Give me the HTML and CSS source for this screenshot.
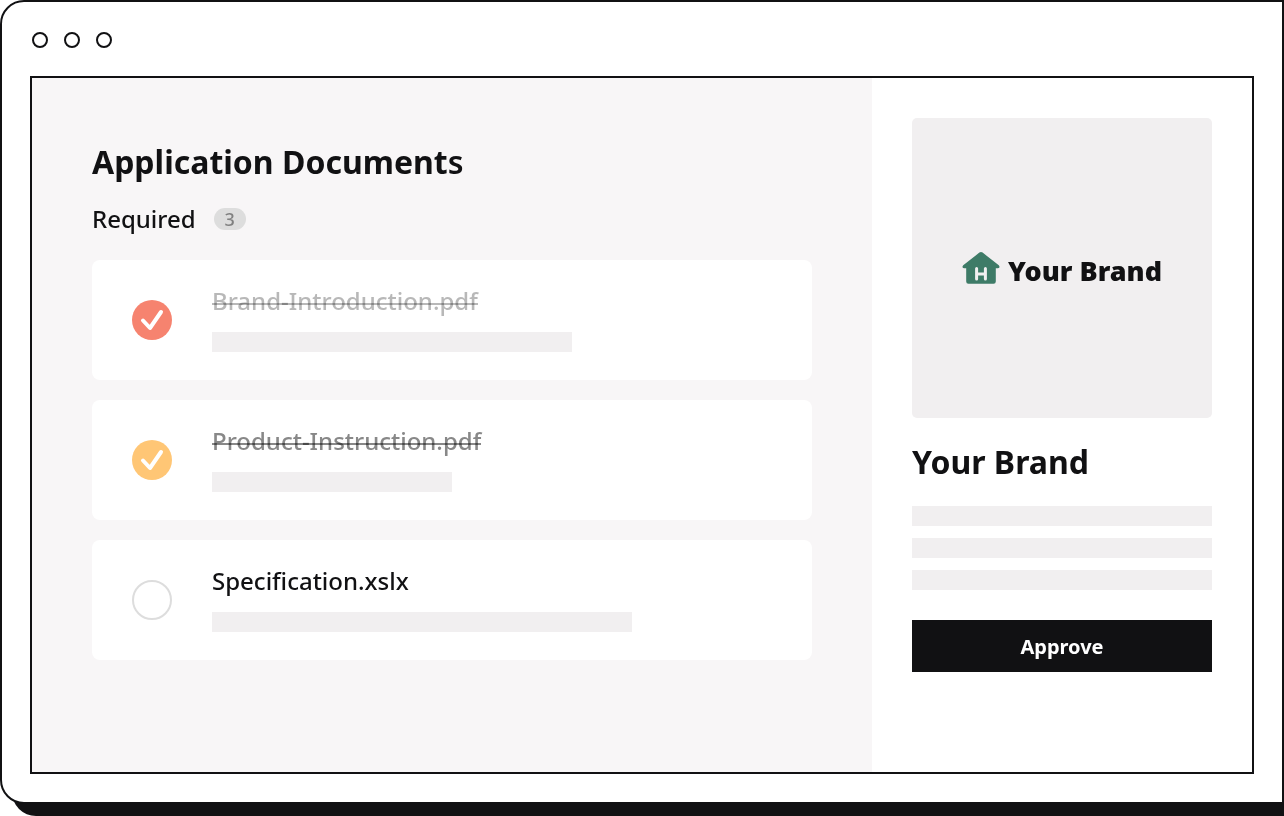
FILE: index.html
```html
<!DOCTYPE html>
<html lang="en">
<head>
<meta charset="utf-8">
<meta name="viewport" content="width=device-width, initial-scale=1">
<title>Application Documents</title>
<link rel="stylesheet" href="styles.css">
</head>
<body>
<div class="window">
  <div class="titlebar">
    <span class="dot"></span><span class="dot"></span><span class="dot"></span>
  </div>
  <div class="viewport">
    <main class="documents">
      <h1 class="title">Application Document<span class="title-end">s</span></h1>
      <h2 class="section"><span>Required</span><span class="count">3</span></h2>
      <ul class="list">
        <li class="card">
          <span class="tick">
            <input class="box box-coral" type="checkbox" id="doc-brand" checked>
            <svg class="check" viewBox="0 0 40 40" aria-hidden="true"><path d="M11 20.5 18 28 29 12"/></svg>
          </span>
          <div class="info">
            <label class="name name-faint" for="doc-brand">Brand-Introduction.pdf</label>
            <span class="bar bar-medium"></span>
          </div>
        </li>
        <li class="card">
          <span class="tick">
            <input class="box box-amber" type="checkbox" id="doc-product" checked>
            <svg class="check" viewBox="0 0 40 40" aria-hidden="true"><path d="M11 20.5 18 28 29 12"/></svg>
          </span>
          <div class="info">
            <label class="name name-muted" for="doc-product">Product-Instruction.pdf</label>
            <span class="bar bar-short"></span>
          </div>
        </li>
        <li class="card">
          <span class="tick">
            <input class="box" type="checkbox" id="doc-spec">
          </span>
          <div class="info">
            <label class="name" for="doc-spec">Specification.xslx</label>
            <span class="bar bar-long"></span>
          </div>
        </li>
      </ul>
    </main>
    <aside class="brand">
      <div class="logo">
        <svg class="house" viewBox="0 0 38 34" aria-hidden="true">
          <path class="house-body" d="M17.4 1.6Q19 .2 20.6 1.6L36.8 14.3Q38.6 17 36 17.2H33.8V30.6Q33.8 32.8 31.6 32.8H6.4Q4.2 32.8 4.2 30.6V17.2H2Q-.6 17 1.2 14.3Z"/>
          <path class="house-mark" d="M14.6 17.4V28M23.4 17.4V28M14.6 23H23.4"/>
        </svg>
        <span class="wordmark">Your Brand</span>
      </div>
      <h2 class="brand-name">Your Brand</h2>
      <div class="lines">
        <span class="bar"></span><span class="bar"></span><span class="bar"></span>
      </div>
      <button class="approve" type="button">Approve</button>
    </aside>
  </div>
</div>
</body>
</html>
```

FILE: styles.css
```css
* {
  box-sizing: border-box;
}

body {
  margin: 0;
  min-height: 100vh;
  padding-bottom: 12px;
  display: flex;
  overflow: hidden;
  background: #fff;
  color: #111113;
  font-family: "Noto Sans", "Open Sans", sans-serif;
}

.window {
  flex: 1;
  display: flex;
  flex-direction: column;
  padding: 28px;
  border: 2px solid #111113;
  border-radius: 24px 0 0 24px;
  background: #fff;
  box-shadow: 12px 12px 0 #111113;
}

.titlebar {
  display: flex;
  gap: 16px;
  padding: 2px 2px 28px;
}

.dot {
  width: 16px;
  height: 16px;
  border: 2px solid #111113;
  border-radius: 50%;
}

.viewport {
  flex: 1;
  display: flex;
  border: 2px solid #111113;
}

.documents {
  flex: 1;
  padding: 60px;
  background: #f8f6f7;
}

.title,
.brand-name {
  margin: 0;
  font-size: 32px;
  line-height: 48px;
  font-weight: 700;
}

.title-end {
  font-weight: 600;
}

.section {
  display: flex;
  align-items: center;
  gap: 18px;
  margin: 16px 0 24px;
  font-size: 24px;
  line-height: 34px;
  font-weight: 500;
}

.count {
  width: 32px;
  border-radius: 11px;
  background: #dddddd;
  color: #808080;
  font-size: 18px;
  line-height: 22px;
  text-align: center;
}

.list {
  display: grid;
  gap: 20px;
  margin: 0;
  padding: 0;
  list-style: none;
}

.card {
  display: flex;
  align-items: center;
  gap: 40px;
  min-height: 120px;
  padding: 24px 40px 28px;
  border-radius: 8px;
  background: #fff;
}

.tick {
  display: grid;
  margin-top: 4px;
}

.box,
.check {
  grid-area: 1 / 1;
  width: 40px;
  height: 40px;
  margin: 0;
}

.box {
  appearance: none;
  border: 2px solid #dddddd;
  border-radius: 50%;
  background: #fff;
}

.box-coral {
  border: 0;
  background: #f6836f;
}

.box-amber {
  border: 0;
  background: #ffc675;
}

.check {
  fill: none;
  stroke: #fff;
  stroke-width: 4;
  stroke-linecap: round;
  stroke-linejoin: round;
  pointer-events: none;
}

.info {
  flex: 1;
  display: grid;
  justify-items: start;
  gap: 14px;
}

.name {
  position: relative;
  font-size: 24px;
  line-height: 34px;
  font-weight: 500;
}

.name-faint {
  color: #b8b8b8;
}

.name-muted {
  color: #888888;
}

/* Strike line through the middle of the lowercase letters */
.name-faint::after,
.name-muted::after {
  content: "";
  position: absolute;
  top: 19px;
  left: 0;
  right: 0;
  height: 2px;
  background: currentColor;
  mix-blend-mode: multiply;
}

.bar {
  height: 20px;
  background: #f1eff0;
}

.bar-short {
  width: 240px;
}

.bar-medium {
  width: 360px;
}

.bar-long {
  width: 420px;
}

.brand {
  display: flex;
  flex-direction: column;
  width: 380px;
  padding: 40px;
}

.logo {
  display: flex;
  align-items: center;
  justify-content: center;
  gap: 8px;
  aspect-ratio: 1;
  border-radius: 5px;
  background: #f1eff0;
}

.house {
  width: 38px;
  height: 34px;
}

.house-body {
  fill: #3e7b67;
}

.house-mark {
  fill: none;
  stroke: #f1eff0;
  stroke-width: 3;
  stroke-linecap: round;
}

.wordmark {
  padding-top: 6px;
  font-size: 27px;
  line-height: 40px;
  font-weight: 900;
}

.brand-name {
  margin: 20px 0;
}

.lines {
  display: grid;
  gap: 12px;
}

.approve {
  margin-top: 30px;
  padding: 13px 12px 11px;
  border: 0;
  background: #111113;
  color: #fff;
  font: 700 20px/28px "Noto Sans", "Open Sans", sans-serif;
}
```
